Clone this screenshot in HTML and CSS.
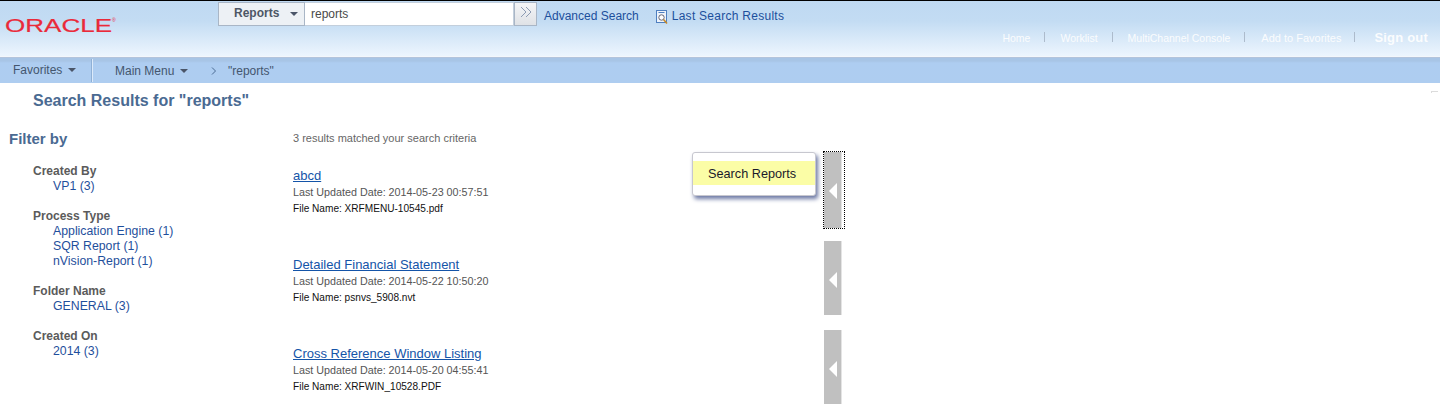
FILE: index.html
```html
<!DOCTYPE html>
<html lang="en">
<head>
<meta charset="utf-8">
<title>Search Results</title>
<link rel="stylesheet" href="styles.css">
</head>
<body>
<header class="masthead">
  <div class="logo">
    <svg width="112" height="18" viewBox="0 0 112 18"><text class="logo-text" x="0" y="15" textLength="107" lengthAdjust="spacingAndGlyphs">ORACLE</text><text class="logo-reg" x="107" y="5">®</text></svg>
  </div>
  <div class="searchbar">
    <div class="scope"><span>Reports</span><i class="caret caret-scope"></i></div>
    <div class="query">reports</div>
    <div class="go"><svg width="14" height="12" viewBox="0 0 14 12"><path d="M2 1l5 5-5 5M7 1l5 5-5 5" fill="none" stroke="#8d9cb4" stroke-width="1"/></svg></div>
    <a class="toplink adv">Advanced Search</a>
    <svg class="last-icon" width="13" height="15" viewBox="0 0 13 15"><rect x=".5" y=".5" width="10" height="12" fill="#eef3fa" stroke="#4f7fc0"/><path d="M2.500 2.500h6" stroke="#4f7fc0"/><circle cx="5.500" cy="7.500" r="2.700" fill="#fff" stroke="#667"/><path d="M7.500 9.500l3.500 4" stroke="#c58a2a" stroke-width="1.600"/></svg>
    <a class="toplink last">Last Search Results</a>
  </div>
  <nav class="usernav">
    <a class="u-home">Home</a><a class="u-work">Worklist</a><a class="u-multi">MultiChannel Console</a><a class="u-fav">Add to Favorites</a><a class="signout">Sign out</a>
  </nav>
</header>
<nav class="menubar">
  <div class="menu-fav">Favorites<i class="caret"></i></div>
  <div class="menu-main">Main Menu<i class="caret"></i></div>
  <svg class="crumb-sep" width="6" height="8" viewBox="0 0 6 8"><path d="M1 .500l3.500 3.500L1 7.500" fill="none" stroke="#4a6a92"/></svg>
  <div class="crumb">"reports"</div>
</nav>
<main class="page">
  <h1 class="title">Search Results for "reports"</h1>
  <div class="columns">
    <aside class="filters">
      <h2 class="filter-head">Filter by</h2>
      <section class="group"><h3>Created By</h3><a>VP1 (3)</a></section>
      <section class="group"><h3>Process Type</h3><a>Application Engine (1)</a><a>SQR Report (1)</a><a>nVision-Report (1)</a></section>
      <section class="group"><h3>Folder Name</h3><a>GENERAL (3)</a></section>
      <section class="group"><h3>Created On</h3><a>2014 (3)</a></section>
    </aside>
    <div class="results">
      <p class="count">3 results matched your search criteria</p>
      <article class="result">
        <div class="info"><a class="r-title">abcd</a><p class="meta">Last Updated Date: 2014-05-23 00:57:51</p><p class="file">File Name: XRFMENU-10545.pdf</p></div>
        <div class="popup"><div class="popup-item">Search Reports</div></div>
        <div class="tab tab-focus"><i class="arrow"></i></div>
      </article>
      <article class="result">
        <div class="info"><a class="r-title">Detailed Financial Statement</a><p class="meta">Last Updated Date: 2014-05-22 10:50:20</p><p class="file">File Name: psnvs_5908.nvt</p></div>
        <div class="tab"><i class="arrow"></i></div>
      </article>
      <article class="result">
        <div class="info"><a class="r-title">Cross Reference Window Listing</a><p class="meta">Last Updated Date: 2014-05-20 04:55:41</p><p class="file">File Name: XRFWIN_10528.PDF</p></div>
        <div class="tab"><i class="arrow"></i></div>
      </article>
    </div>
  </div>
  <div class="corner"></div>
</main>
</body>
</html>
```
FILE: styles.css
```css
* { box-sizing: border-box; }
html, body { margin: 0; padding: 0; }
body {
  height: 405px;
  overflow: hidden;
  background: #fff;
  font-family: "Liberation Sans", Arial, sans-serif;
  font-size: 12px;
  color: #333;
}
h1, h2, h3, p { margin: 0; }

.masthead {
  height: 58px;
  border-top: 1px solid #000;
  border-bottom: 1px solid #b3c4dc;
  box-shadow: inset 0 -1px 0 #f4f7fb;
  background: linear-gradient(#bfd9f2 0, #c3dcf3 20px, #eef6fe 56px);
  display: grid;
  grid-template-columns: 218px 1fr;
  grid-template-rows: 1fr 27px;
  position: relative;
}
.logo { grid-row: 1 / 3; padding: 16px 0 0 5px; }
.logo svg { display: block; }
.logo-text {
  font-family: "Liberation Sans", Arial, sans-serif;
  font-size: 18px;
  fill: #ea2a3a;
  stroke: #ea2a3a;
  stroke-width: .2px;
}
.logo-reg { font-size: 5px; fill: #ea2a3a; }

.searchbar { display: flex; align-items: flex-start; padding-top: 1px; }
.scope {
  width: 87px;
  height: 24px;
  background: #edf1f5;
  border: 1px solid #a9b6c6;
  font-weight: bold;
  color: #4d5766;
  display: flex;
  align-items: center;
  padding: 0 0 3px 15px;
}
.scope span { width: 56px; }
.caret {
  display: inline-block;
  width: 0;
  height: 0;
  border-left: 4px solid transparent;
  border-right: 4px solid transparent;
  border-top: 4px solid #4a5568;
  margin-left: 6px;
  vertical-align: 2px;
}
.caret-scope { margin: 3px 0 0 0; }
.query {
  width: 209px;
  height: 24px;
  background: #fff;
  border: 1px solid #c3cfdc;
  border-left: 0;
  padding: 4px 0 0 6px;
  color: #4a4a4a;
}
.go {
  width: 23px;
  height: 24px;
  background: linear-gradient(#f4f5f7, #dfe2e6);
  border: 1px solid #a9b6c6;
  padding: 3px 0 0 4px;
}
.go svg { display: block; }
.toplink { color: #1c4f9c; font-size: 12px; line-height: 29px; white-space: nowrap; }
.adv { margin-left: 7px; }
.last { letter-spacing: .27px; }
.last-icon { margin: 8px 3px 0 17px; flex: none; }

.usernav {
  grid-column: 2;
  grid-row: 2;
  display: flex;
  align-items: flex-start;
  justify-content: flex-end;
  padding-right: 12px;
  color: #fff;
  font-size: 10.500px;
  line-height: 14px;
}
.usernav a { opacity: .9; }
.u-home, .u-work, .u-multi, .u-fav { position: relative; }
.u-home::after, .u-work::after, .u-multi::after, .u-fav::after {
  content: "";
  position: absolute;
  right: -15px;
  top: 1px;
  width: 1px;
  height: 10px;
  background: #a9b7c8;
}
.u-fav::after { right: -14px; }
.u-home { margin-right: 30px; }
.u-work { margin-right: 30px; }
.u-multi { margin-right: 31px; }
.u-fav { margin-right: 33px; font-size: 11px; }
.signout { font-weight: bold; font-size: 13px; line-height: 13px; letter-spacing: .2px; }

.menubar {
  height: 25px;
  background: linear-gradient(#a8c5e6 0, #a8c5e6 3px, #aecdf1 5px, #aecdf0 100%);
  display: flex;
  align-items: center;
  color: #44566e;
  font-size: 12px;
}
.menu-fav {
  width: 93px;
  height: 23px;
  padding-left: 13px;
  line-height: 23px;
  border-right: 1px solid #dceafa;
  box-shadow: inset -1px 0 0 #8fb0d6;
}
.menu-main { margin-left: 22px; width: 96px; }
.crumb-sep { flex: none; margin-right: 11px; }

.page { position: relative; }
.title {
  font-size: 16px;
  line-height: 16px;
  font-weight: bold;
  color: #4a6a92;
  padding: 10px 0 0 33px;
  box-sizing: content-box;
}
.columns { display: grid; grid-template-columns: 293px 551px; padding-top: 12px; }
.filter-head {
  font-size: 15px;
  line-height: 18px;
  font-weight: bold;
  color: #4a6a92;
  padding: 9px 0 16px 9px;
  box-sizing: content-box;
}
.group { padding-left: 53px; margin-bottom: 15px; }
.group h3 {
  font-size: 12px;
  line-height: 15px;
  font-weight: bold;
  color: #5b5b5b;
  margin-left: -20px;
}
.group a { display: block; font-size: 12.300px; line-height: 15px; color: #1f4f9c; }

.count { font-size: 11px; line-height: 14px; color: #666; padding-top: 10px; margin-bottom: 7px; box-sizing: content-box; }
.result {
  position: relative;
  height: 89px;
  display: flex;
  justify-content: space-between;
  align-items: flex-start;
}
.info { padding-top: 16px; }
.r-title { display: block; font-size: 13px; line-height: 15px; color: #1454a8; text-decoration: underline; margin-bottom: 2px; }
.meta { font-size: 10.750px; line-height: 15px; color: #555; }
.file { font-size: 10.100px; line-height: 15px; color: #111; margin-top: 1px; }
.tab {
  width: 20px;
  height: 74px;
  background: linear-gradient(to right, #c0c0c0 17px, #e4e4e4 17px, #e4e4e4 18px, #fff 18px);
  position: relative;
  display: block;
}
.tab-focus { outline: 1px dotted #000; outline-offset: 0; height: 76px; }
.arrow {
  position: absolute;
  left: 5px;
  top: 31px;
  width: 0;
  height: 0;
  border-top: 8px solid transparent;
  border-bottom: 8px solid transparent;
  border-right: 8px solid #fff;
}
.popup {
  position: absolute;
  left: 399px;
  top: 0;
  width: 124px;
  height: 44px;
  background: #fff;
  border: 1px solid #c7c7cf;
  border-radius: 3px;
  padding-top: 8px;
  box-shadow: 2px 3px 4px #6c78a4;
}
.popup-item {
  height: 24px;
  background: #fbfda6;
  font-size: 12.700px;
  line-height: 24px;
  padding: 1px 0 0 15px;
  color: #1a1a2a;
}
.corner {
  position: absolute;
  right: 2px;
  top: 8px;
  width: 7px;
  height: 2px;
  border-top: 1px solid #dcdcdc;
  border-left: 1px solid #dcdcdc;
}
```
